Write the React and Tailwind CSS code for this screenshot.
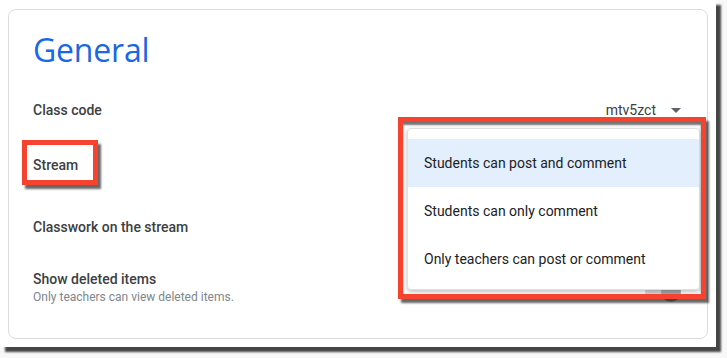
import React from 'react';

const options = [
    'Students can post and comment',
    'Students can only comment',
    'Only teachers can post or comment',
];

const Row = ({ label, className, children }) => (
    <div className={`flex items-center justify-between ${className}`}>
        <span className="text-[14px] font-medium text-[#3c4043]">{label}</span>
        {children}
    </div>
);

const App = () => {
    const selected = 0;

    return (
        <div className="w-[727px] h-[358px] bg-[#f8f8f8] overflow-hidden" style={{ fontFamily: 'Roboto, "Liberation Sans", sans-serif' }}>
            <div className="w-[716px] h-[347px] bg-white shadow-[5px_5px_2px_rgba(0,0,0,0.72)] pt-[9px] pl-[8px]">
                {/* Settings card */}
                <div className="relative w-[700px] h-[330px] rounded-lg border border-[#dadce0] pl-6 pr-[26px]">
                    <h1 className="pt-[20px] text-[32px] leading-[40px] text-[#1a67e3] tracking-[-0.2px]" style={{ fontFamily: '"Open Sans", Roboto, sans-serif' }}>
                        General
                    </h1>

                    <Row label="Class code" className="mt-[16px] h-[48px]">
                        <div className="flex items-center gap-[15px]">
                            <span className="text-[14px] text-[#3c4043]">mtv5zct</span>
                            <svg width="10" height="5" viewBox="0 0 10 5" className="mt-[1px]">
                                <path d="M0 0h10L5 5z" fill="#5f6368" />
                            </svg>
                        </div>
                    </Row>

                    <Row label="Stream" className="h-[62px]" />
                    <Row label="Classwork on the stream" className="h-[62px]" />

                    <div className="flex justify-between pt-[11px]">
                        <div className="flex flex-col">
                            <span className="text-[14px] leading-[20px] font-medium text-[#3c4043]">Show deleted items</span>
                            <span className="text-[12px] leading-[16px] text-[#80868b]">Only teachers can view deleted items.</span>
                        </div>
                        <div className="mt-[16px] relative w-[36px] h-[14px] rounded-full bg-[#d5d7da]">
                            <div className="absolute right-0 top-[-3px] w-[20px] h-[20px] rounded-full bg-[#a4a9ae]" />
                        </div>
                    </div>

                    {/* Annotation around Stream */}
                    <div className="absolute left-[13px] top-[130px] w-[76px] h-[45px] border-[5px] border-[#f6432f] shadow-[3px_4px_2px_rgba(0,0,0,0.6)]" />

                    {/* Open dropdown menu */}
                    <div className="absolute left-[398px] top-[118px] w-[293px] h-[162px] rounded bg-white border border-[#e0e0e0] shadow-[0_2px_4px_rgba(0,0,0,0.25)] pt-[10px] pb-[6px]">
                        {options.map((opt, i) => (
                            <div
                                key={opt}
                                className={`h-[48px] flex items-center pl-[16px] text-[14px] text-[#202124] ${i === selected ? 'bg-[#e4effd]' : ''}`}
                            >
                                {opt}
                            </div>
                        ))}
                    </div>

                    {/* Annotation around dropdown */}
                    <div className="absolute left-[389px] top-[107px] w-[308px] h-[182px] border-[5px] border-[#f6432f] shadow-[inset_0_3px_2px_rgba(0,0,0,0.55),3px_4px_2px_rgba(0,0,0,0.6)]" />
                </div>
            </div>
        </div>
    );
};

export default App;
